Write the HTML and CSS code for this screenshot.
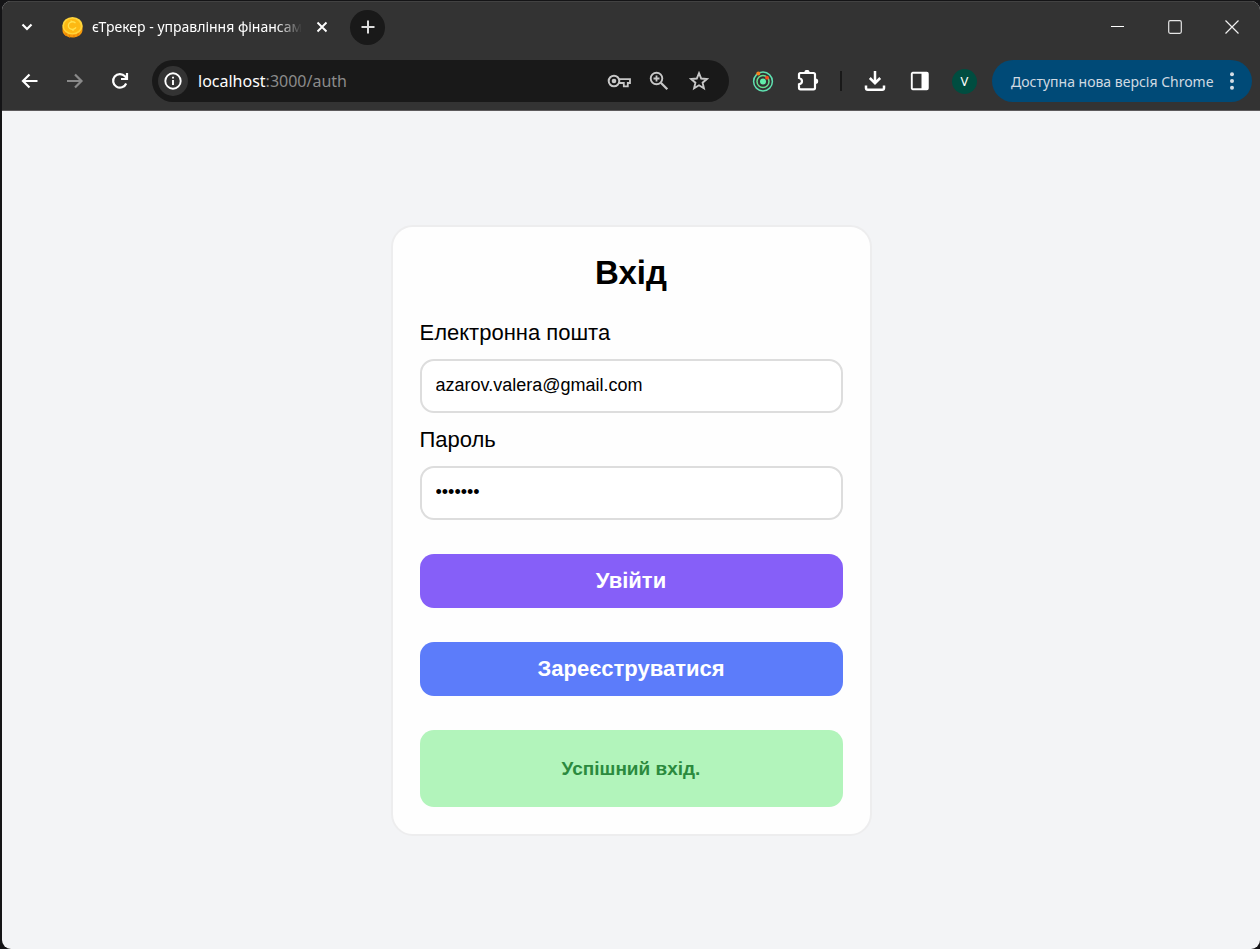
FILE: index.html
```html
<!DOCTYPE html>
<html lang="uk">
<head>
<meta charset="utf-8">
<title>єТрекер - управління фінансами</title>
<link rel="stylesheet" href="styles.css">
</head>
<body>
<div class="window">
  <header class="chrome">
    <div class="tabstrip">
      <button class="tab-search" aria-label="Пошук вкладок">
        <svg width="14" height="14" viewBox="0 0 14 14"><path d="M2.500 4.500 7 9l4.500-4.500" fill="none" stroke="#fff" stroke-width="2.200"/></svg>
      </button>
      <div class="tab">
        <svg class="favicon" width="21" height="21" viewBox="0 0 21 21">
          <path d="M0.500 9.500v4c0 4 4.300 7 9.800 7s10.200-3 10.200-7.500v-4z" fill="#f79a0a"/>
          <path d="M4 16v3M7.500 18v2.500M12 18v2.500M16 16v3" stroke="#e88104" stroke-width="1.200"/>
          <ellipse cx="10.500" cy="8.800" rx="10.200" ry="8.800" fill="#ffd43a"/>
          <ellipse cx="10.300" cy="9" rx="8.400" ry="7.200" fill="#fdb913"/>
          <path d="M13.500 6.200c-1-1.300-3-1.700-4.700-1C6.700 6 5.800 8.200 6.700 10.200c1 2 3.500 2.700 5.500 1.700.8-.4 1.400-1 1.700-1.700M9.200 3.500v1.800M11 12v2" fill="none" stroke="#ffe04d" stroke-width="1.300"/>
        </svg>
        <span class="tab-title">єТрекер - управління фінансам</span>
        <button class="tab-close" aria-label="Закрити вкладку">
          <svg width="12" height="12" viewBox="0 0 12 12"><path d="m1.500 1.500 9 9m0-9-9 9" stroke="#fff" stroke-width="1.900"/></svg>
        </button>
      </div>
      <button class="new-tab" aria-label="Нова вкладка">
        <svg width="14" height="14" viewBox="0 0 14 14"><path d="M7 .5v13M.5 7h13" stroke="#ddd" stroke-width="2"/></svg>
      </button>
      <div class="window-controls">
        <button aria-label="Згорнути"><svg width="14" height="14" viewBox="0 0 14 14"><path d="M0 6.500h13" stroke="#fff"/></svg></button>
        <button aria-label="Розгорнути"><svg width="14" height="14" viewBox="0 0 14 14"><rect x=".7" y=".7" width="12.600" height="12.600" rx="1.500" fill="none" stroke="#e6e6e6" stroke-width="1.200"/></svg></button>
        <button aria-label="Закрити"><svg width="14" height="14" viewBox="0 0 14 14"><path d="m.5.5 13 13m0-13-13 13" stroke="#f0f0f0" stroke-width="1.200"/></svg></button>
      </div>
    </div>
    <div class="toolbar">
      <button class="tool" aria-label="Назад"><svg width="18" height="18" viewBox="0 0 18 18"><path d="M16.500 9H3M8.500 2.500 2 9l6.500 6.500" fill="none" stroke="#fff" stroke-width="2.200"/></svg></button>
      <button class="tool" aria-label="Вперед" disabled><svg width="18" height="18" viewBox="0 0 18 18"><path d="M1 9h13.500M9 2.500 15.500 9 9 15.500" fill="none" stroke="#8a8a8a" stroke-width="2.200"/></svg></button>
      <button class="tool" aria-label="Оновити"><svg width="18" height="18" viewBox="0 0 18 18"><path d="M15.200 11.500A6.800 6.800 0 1 1 14 4.300L16 6.400M16 1v6h-6" fill="none" stroke="#fff" stroke-width="2.200"/></svg></button>
      <div class="omnibox">
        <button class="site-info" aria-label="Відомості про сайт"><svg width="18" height="18" viewBox="0 0 18 18"><circle cx="9" cy="9" r="7.700" fill="none" stroke="#fff" stroke-width="1.900"/><path d="M9 8v5M9 4.700v1.900" stroke="#fff" stroke-width="1.900"/></svg></button>
        <span class="url"><span class="host">localhost</span>:3000/auth</span>
        <button class="omni-tool" aria-label="Паролі"><svg width="24" height="16" viewBox="0 0 24 16"><circle cx="7" cy="8" r="5.300" fill="none" stroke="#c7c7c7" stroke-width="2"/><circle cx="7" cy="8" r="2.300" fill="#c7c7c7"/><path d="M11.500 6.200H23v3.800h-2.200v3.400h-4v-3.400h-5.300" fill="none" stroke="#c7c7c7" stroke-width="1.800"/></svg></button>
        <button class="omni-tool" aria-label="Масштаб"><svg width="20" height="20" viewBox="0 0 20 20"><circle cx="7.500" cy="7.500" r="5.800" fill="none" stroke="#c7c7c7" stroke-width="1.900"/><path d="m11.800 11.800 6.500 6.500" stroke="#c7c7c7" stroke-width="2.300"/><path d="M7.500 4.500v6M4.500 7.500h6" stroke="#c7c7c7" stroke-width="1.800"/></svg></button>
        <button class="omni-tool" aria-label="Додати закладку"><svg width="20" height="20" viewBox="0 0 20 20"><path d="m10 2.200 2.200 5.300 5.700.5-4.300 3.700 1.300 5.600-4.900-3-4.900 3 1.300-5.600L2.100 8l5.700-.5z" fill="none" stroke="#c7c7c7" stroke-width="1.900"/></svg></button>
      </div>
      <div class="actions">
        <button class="tool" aria-label="Розширення Orbit">
          <svg width="22" height="22" viewBox="0 0 22 22"><g fill="none" stroke-width="1.500"><circle cx="11" cy="11.500" r="9.400" stroke="#5fe0b0"/><circle cx="11" cy="11.500" r="6" stroke="#66e08f"/></g><circle cx="11" cy="11.500" r="3" fill="#62edaa"/><circle cx="6.300" cy="3.500" r="2" fill="#f5821f"/><circle cx="15" cy="7.700" r="1.900" fill="#f4511e"/></svg>
        </button>
        <button class="tool" aria-label="Розширення"><svg width="22" height="22" viewBox="0 0 22 22"><path d="M2 4.500Q2 3 3.500 3h13Q18 3 18 4.500v13.300q0 1.500-1.500 1.500h-13q-1.500 0-1.500-1.500v-3.400q3-.8 3-3.200T2 8z" fill="none" stroke="#fff" stroke-width="2.200"/><path d="M7.300 2.500a2.700 2.700 0 0 1 5.400 0zM18.500 8.500a2.700 2.700 0 0 1 0 5.400z" fill="#fff"/></svg></button>
        <span class="divider"></span>
        <button class="tool" aria-label="Завантаження"><svg width="22" height="22" viewBox="0 0 22 22"><path d="M11 1v12M5.800 8l5.200 5.200L16.200 8M2 15.500V18q0 1.800 1.800 1.800h14.400Q20 19.800 20 18v-2.500" fill="none" stroke="#fff" stroke-width="2.500"/></svg></button>
        <button class="tool" aria-label="Бічна панель"><svg width="20" height="20" viewBox="0 0 20 20"><rect x="1.800" y="1.800" width="16" height="16.400" rx="1" fill="none" stroke="#fff" stroke-width="1.900"/><path d="M11.500 1.500H18v17h-6.500z" fill="#fff"/></svg></button>
        <button class="tool" aria-label="Профіль"><span class="avatar">V</span></button>
      </div>
      <button class="update"><span>Доступна нова версія Chrome</span><svg width="4" height="18" viewBox="0 0 4 18"><g fill="#d5dde5"><circle cx="2" cy="2.200" r="2"/><circle cx="2" cy="9" r="2"/><circle cx="2" cy="15.800" r="2"/></g></svg></button>
    </div>
  </header>
  <main class="page">
    <form class="card">
      <h1 class="title">Вхід</h1>
      <label class="label" for="email">Електронна пошта</label>
      <input class="field" id="email" type="email" value="azarov.valera@gmail.com">
      <label class="label" for="password">Пароль</label>
      <input class="field" id="password" type="password" value="1234567">
      <button class="btn btn-login" type="button">Увійти</button>
      <button class="btn btn-register" type="button">Зареєструватися</button>
      <p class="message" role="status">Успішний вхід.</p>
    </form>
  </main>
</div>
</body>
</html>
```
FILE: styles.css
```css
* {
  box-sizing: border-box;
}

body {
  margin: 0;
  padding: 1px 0 0 2px;
  background: #141416;
  font-family: "Liberation Sans", Arial, sans-serif;
}

button {
  display: flex;
  align-items: center;
  justify-content: center;
  margin: 0;
  padding: 0;
  border: 0;
  background: none;
  font: inherit;
}

svg {
  display: block;
  flex: none;
}

.window {
  display: flex;
  flex-direction: column;
  min-height: calc(100vh - 1px);
  overflow: hidden;
  border-radius: 9px;
  background: #f3f4f6;
}

.chrome {
  border-top: 1px solid #424242;
  border-bottom: 1px solid #5c5a5c;
  background: #333;
  font-family: "Noto Sans", "Open Sans", sans-serif;
}

.tabstrip {
  display: flex;
  align-items: center;
  height: 50px;
}

.tab-search {
  width: 50px;
  height: 34px;
}

.tab {
  display: flex;
  align-items: center;
  width: 284px;
  padding-left: 10px;
}

.tab-title {
  width: 210px;
  margin-left: 9px;
  white-space: nowrap;
  color: #fff;
  font-size: 14px;
  line-height: 24px;
  -webkit-mask-image: linear-gradient(to right, #000 88%, transparent);
  mask-image: linear-gradient(to right, #000 88%, transparent);
}

.tab-close {
  width: 24px;
  height: 24px;
  margin-left: 8px;
}

.new-tab {
  width: 35px;
  height: 35px;
  margin-left: 14px;
  border-radius: 50%;
  background: #191919;
}

.window-controls {
  display: flex;
  margin-left: auto;
}

.window-controls button {
  width: 57px;
  height: 40px;
}

.toolbar {
  display: flex;
  align-items: center;
  height: 58px;
  padding: 0 8px 0 5px;
}

.tool {
  width: 45px;
  height: 42px;
}

.omnibox {
  display: flex;
  flex: 1;
  align-items: center;
  height: 42px;
  margin-left: 10px;
  padding: 0 10px 0 6px;
  border-radius: 21px;
  background: #191919;
}

.site-info {
  width: 30px;
  height: 30px;
  border-radius: 50%;
  background: #333;
}

.url {
  flex: 1;
  margin-left: 10px;
  color: #8b8b8b;
  font-size: 16px;
  line-height: 24px;
}

.host {
  color: #fff;
}

.omni-tool {
  width: 40px;
  height: 32px;
}

.actions {
  display: flex;
  align-items: center;
  margin: 0 5px 0 11px;
}

.divider {
  width: 2px;
  height: 20px;
  margin: 0 10px;
  background: #191919;
}

.avatar {
  width: 25px;
  height: 25px;
  border-radius: 50%;
  background: #004d40;
  color: #fff;
  font-size: 13px;
  line-height: 25px;
}

.update {
  justify-content: space-between;
  width: 260px;
  height: 42px;
  padding: 0 18px 0 19px;
  border-radius: 21px;
  background: #004a77;
  color: #d0dae2;
  font-size: 14px;
  white-space: nowrap;
}

.page {
  display: flex;
  flex: 1;
  align-items: center;
  justify-content: center;
}

.card {
  display: flex;
  flex-direction: column;
  width: 100%;
  max-width: 481px;
  padding: 27px;
  border: 2px solid #ededee;
  border-radius: 22px;
  background: #fefefe;
}

.title {
  margin: 0 0 14px;
  font-size: 33px;
  line-height: 38px;
  text-align: center;
}

.label {
  margin: 14px 0;
  font-size: 22px;
  line-height: 25px;
}

.field {
  height: 54px;
  padding: 0 14px;
  border: 2px solid #ddd;
  border-radius: 14px;
  background: #fff;
  color: #000;
  font-family: inherit;
  font-size: 18px;
}

.btn {
  height: 54px;
  margin-top: 34px;
  border-radius: 14px;
  color: #fff;
  font-size: 22px;
  font-weight: bold;
}

.btn-login {
  background: #865ff8;
}

.btn-register {
  background: #5c7cfa;
}

.message {
  margin: 34px 0 0;
  padding: 26px;
  border-radius: 14px;
  background: #b2f4bb;
  color: #2b8a3e;
  font-size: 19px;
  font-weight: bold;
  line-height: 25px;
  text-align: center;
}
```
